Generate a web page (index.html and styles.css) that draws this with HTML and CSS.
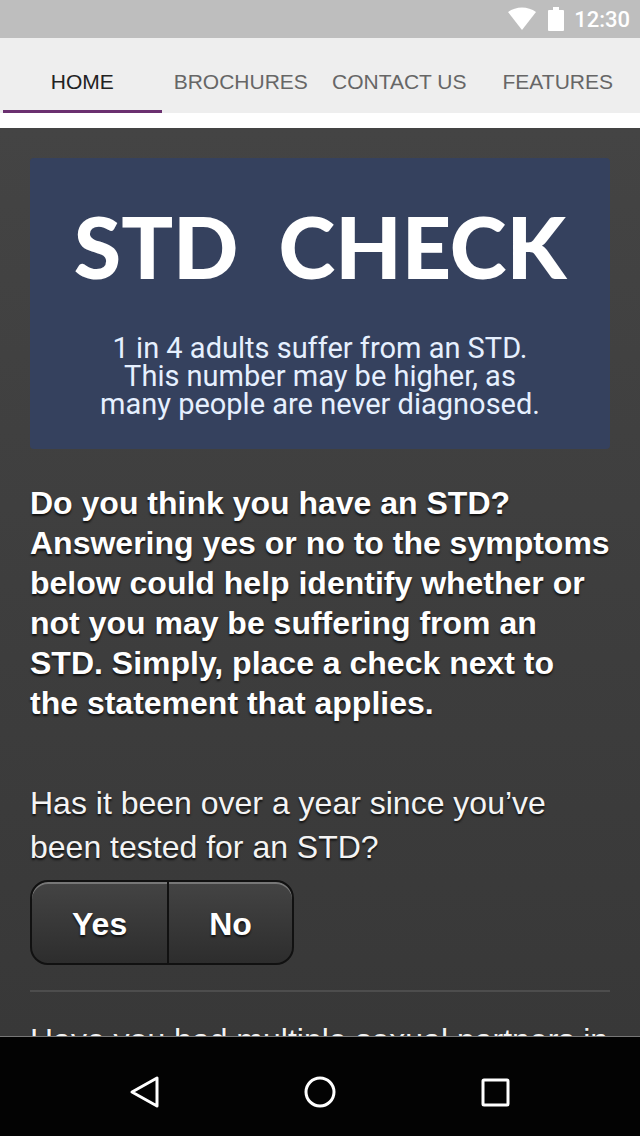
FILE: index.html
```html
<!DOCTYPE html>
<html lang="en">
<head>
    <meta charset="UTF-8">
    <meta name="viewport" content="width=device-width, initial-scale=1.0">
    <title>STD Check</title>
    <link rel="stylesheet" href="styles.css">
</head>
<body>
    <div class="status-bar">
        <svg class="wifi" viewBox="0 0 28 24" aria-hidden="true"><path d="M14 23 L0 5 C8 -1 20 -1 28 5 Z"/></svg>
        <svg class="battery" viewBox="0 0 16 24" aria-hidden="true"><path d="M5 0 H11 V3 H15 Q16 3 16 4 V23 Q16 24 15 24 H1 Q0 24 0 23 V4 Q0 3 1 3 H5 Z"/></svg>
        <span class="clock">12:30</span>
    </div>

    <nav class="tabs">
        <a href="#home" class="tab active">HOME</a>
        <a href="#brochures" class="tab">BROCHURES</a>
        <a href="#contact" class="tab">CONTACT US</a>
        <a href="#features" class="tab">FEATURES</a>
    </nav>

    <main class="content">
        <header class="banner">
            <h1><span>STD</span> <span>CHECK</span></h1>
            <p>1 in 4 adults suffer from an STD.<br>This number may be higher, as<br>many people are never diagnosed.</p>
        </header>

        <p class="intro">Do you think you have an STD? Answering yes or no to the symptoms below could help identify whether or not you may be suffering from an STD. Simply, place a check next to the statement that applies.</p>

        <fieldset class="question">
            <legend>Has it been over a year since you’ve been tested for an STD?</legend>
            <div class="choices">
                <label class="choice" for="testedYes"><input type="radio" name="tested" id="testedYes">Yes</label>
                <label class="choice" for="testedNo"><input type="radio" name="tested" id="testedNo">No</label>
            </div>
        </fieldset>

        <fieldset class="question">
            <legend>Have you had multiple sexual partners in</legend>
        </fieldset>
    </main>

    <div class="system-nav">
        <button type="button" aria-label="Back"><svg viewBox="0 0 36 36"><path d="M5 18 L30 4 V32 Z"/></svg></button>
        <button type="button" aria-label="Home"><svg viewBox="0 0 36 36"><circle cx="18" cy="18" r="14"/></svg></button>
        <button type="button" aria-label="Recent apps"><svg viewBox="0 0 36 36"><rect x="6" y="6" width="25" height="25" rx="1"/></svg></button>
    </div>
</body>
</html>
```
FILE: styles.css
```css
* {
    box-sizing: border-box;
}
body {
    margin: 0;
    height: 100vh;
    display: flex;
    flex-direction: column;
    overflow: hidden;
    font-family: "Liberation Sans", Arial, sans-serif;
    background-color: #fff;
    color: #fff;
}

/* status bar */
.status-bar {
    display: flex;
    flex-shrink: 0;
    align-items: center;
    justify-content: flex-end;
    height: 38px;
    padding: 0 10px;
    background-color: #bebebe;
    font-family: Roboto, sans-serif;
}
.status-bar svg {
    height: 24px;
    fill: #fff;
}
.wifi {
    width: 28px;
    margin-right: 12px;
}
.battery {
    width: 16px;
    margin-right: 10px;
}
.clock {
    padding-top: 2px;
    font-size: 22px;
    font-weight: 500;
    line-height: 36px;
}

/* tabs */
.tabs {
    display: grid;
    grid-template-columns: repeat(4, 1fr);
    flex-shrink: 0;
    margin-bottom: 15px;
    padding: 0 3px;
    background-color: #eee;
}
.tab {
    padding: 33px 0 18px;
    border-bottom: 3px solid transparent;
    font-size: 21px;
    line-height: 21px;
    text-align: center;
    text-decoration: none;
    color: #666;
}
.tab.active {
    border-color: #6b3070;
    color: #222;
}

/* page */
.content {
    flex: 1;
    min-height: 0;
    overflow: hidden;
    padding: 30px 30px 0;
    background: linear-gradient(#444, #383838);
    border-bottom: 1px solid #777;
    font-size: 32px;
    text-shadow: 0 2px 2px #111;
}
.banner {
    padding: 38px 20px 31px;
    border-radius: 4px;
    background-color: #35415e;
    text-align: center;
    text-shadow: none;
}
.banner h1 {
    display: flex;
    justify-content: center;
    gap: 40px;
    margin: 0 0 38px;
    font-family: Lato, sans-serif;
    font-size: 86px;
    font-weight: 900;
    line-height: 100px;
}
.banner p {
    margin: 0;
    font-family: Roboto, sans-serif;
    font-size: 29px;
    line-height: 28px;
    color: #e6f0ff;
}
.intro {
    margin: 34px 0 58px;
    font-weight: bold;
    line-height: 40px;
}
.question {
    margin: 0 0 26px;
    padding: 0 0 25px;
    border: 0;
    border-bottom: 2px solid #4d4d4d;
}
.question legend {
    padding: 0;
    margin-bottom: 11px;
    line-height: 44px;
    color: #f4f4f4;
}
.choices {
    display: inline-flex;
    vertical-align: top;
    overflow: hidden;
    border: 2px solid #111;
    border-radius: 18px;
    background: linear-gradient(#444, #2d2d2d);
    box-shadow: inset 0 2px 0 #777;
}
.choice {
    position: relative;
    padding: 22px 40px 18px;
    font-weight: bold;
    line-height: 41px;
    cursor: pointer;
}
.choice + .choice {
    border-left: 2px solid #111;
}
.choice input {
    position: absolute;
    inset: 0;
    margin: 0;
    opacity: 0;
    cursor: pointer;
}

/* system buttons */
.system-nav {
    display: flex;
    flex-shrink: 0;
    align-items: center;
    justify-content: center;
    gap: 139px;
    padding: 37px 0 26px;
    background-color: #030303;
}
.system-nav button {
    padding: 0;
    border: 0;
    background: none;
}
.system-nav svg {
    display: block;
    width: 36px;
    height: 36px;
    fill: none;
    stroke: #fff;
    stroke-width: 3;
    stroke-linejoin: round;
}
```
